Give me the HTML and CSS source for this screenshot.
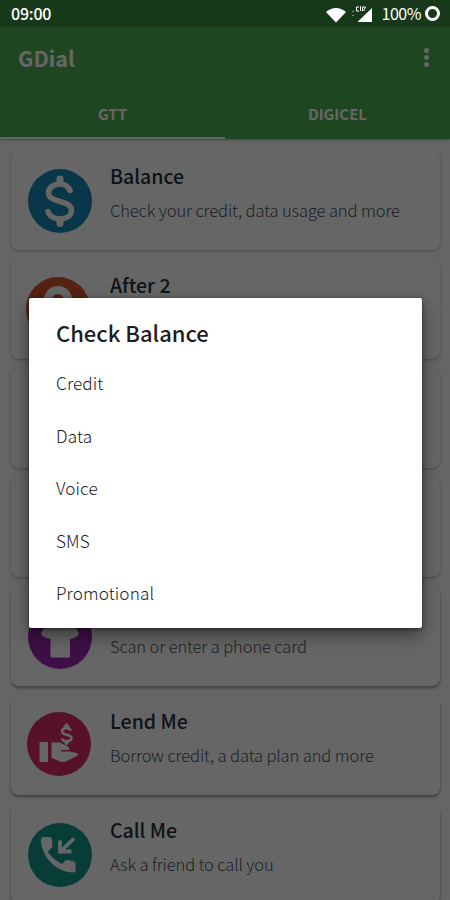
FILE: index.html
```html
<!DOCTYPE html>
<html lang="en">
<head>
<meta charset="utf-8">
<title>GDial</title>
<link rel="stylesheet" href="styles.css">
</head>
<body>
<div class="phone">
  <div class="status">
    <span class="clock">09:00</span>
    <svg class="status-icons" width="50" height="20" viewBox="0 0 50 20">
      <path fill="#fff" d="M2 8Q12 0 22 8L12 18.500Z"/>
      <path fill="#fff" d="M33.500 18 48 4V18Z"/>
      <path fill="none" stroke="#fff" d="M35 3h-2.500v4h2.500M36.500 2v5M38.500 7V3h3l-2 4"/>
      <path fill="#719174" d="M28 7h2v1h-2zM28 11h2v1h-2z"/>
    </svg>
    <span class="percent">100%</span>
    <span class="battery"></span>
  </div>
  <header class="header">
    <div class="toolbar">
      <h1 class="app-name">GDial</h1>
      <div class="more"><i></i><i></i><i></i></div>
    </div>
    <nav class="tabs"><span class="tab active">GTT</span><span class="tab">DIGICEL</span></nav>
  </header>
  <main class="list">
    <section class="card">
      <svg class="icon" viewBox="0 0 64 64"><circle cx="32" cy="32" r="32" fill="#1b87b9"/><path fill="none" stroke="#fff" stroke-width="5.500" stroke-linecap="round" d="M42 21.500C40 16.500 35 14.500 31 15C25 15.500 20.500 19 20.500 23.500C20.500 29 25 30.500 32 32.500C39 34.500 43.500 36 43.500 41.500C43.500 47 38 50 32 50C26 50 21 47 20 42.500"/><path stroke="#fff" stroke-width="7" stroke-linecap="round" d="M32 10v4M32 51v3.500"/></svg>
      <div class="copy"><h2>Balance</h2><p>Check your credit, data usage and more</p></div>
    </section>
    <section class="card">
      <svg class="icon centered" viewBox="0 0 64 64"><circle cx="32" cy="32" r="32" fill="#d6552f"/><circle cx="32" cy="23" r="10" fill="none" stroke="#fff" stroke-width="8"/></svg>
      <div class="copy"><h2>After 2</h2></div>
    </section>
    <section class="card"></section>
    <section class="card"></section>
    <section class="card">
      <svg class="icon" viewBox="0 0 64 64"><circle cx="32" cy="32" r="32" fill="#9c27b0"/><path fill="#fff" stroke="#fff" stroke-width="3" stroke-linejoin="round" d="M32 12 48 26Q51 30 46 31L40.500 33V51H24V33L18 31Q13 30 16 26Z"/></svg>
      <div class="copy no-title"><p>Scan or enter a phone card</p></div>
    </section>
    <section class="card">
      <svg class="icon shifted" viewBox="0 0 64 64"><circle cx="32" cy="32" r="32" fill="#d92d67"/><path fill="#fff" d="M12.500 30h8.500v20h-8.500zM24.500 30.500H33l9 4.500v3h-8v1.500h9l6.500 1.500q3 1 .5 3L41 48.500Q37 51 32 49l-7.500-3Z"/><path fill="none" stroke="#fff" stroke-width="2.500" d="M44 18.500C42 15 35 15.500 35 19.500C35 24 44.500 21.500 44.500 26C44.500 30 36.500 30 34.500 26.500"/><path fill="#fff" d="m35.500 15.500 4-4.500 4 4.500zM35.500 29l4 4.500 4-4.500z"/></svg>
      <div class="copy"><h2>Lend Me</h2><p>Borrow credit, a data plan and more</p></div>
    </section>
    <section class="card">
      <svg class="icon" viewBox="0 0 64 64"><circle cx="32" cy="32" r="32" fill="#16998a"/><path fill="#fff" d="M15 14h6.500q2 0 2.300 2l.7 6.500q0 2-1.700 3.500l-3 2.500Q24 36 34 41l3-3q1.200-1.200 3-1l6 1.500q1.500.5 1.500 2V47q0 2.500-2.500 2.500C29 49.500 13 34 13 16.500Q13 14 15 14Z"/><path fill="none" stroke="#fff" stroke-width="3.800" d="M46 15.500 33 28M32 17.500V28.500H43.500"/></svg>
      <div class="copy"><h2>Call Me</h2><p>Ask a friend to call you</p></div>
    </section>
  </main>
  <div class="scrim">
    <div class="dialog" role="dialog">
      <h2 class="dialog-title">Check Balance</h2>
      <ul class="options"><li>Credit</li><li>Data</li><li>Voice</li><li>SMS</li><li>Promotional</li></ul>
    </div>
  </div>
</div>
</body>
</html>
```
FILE: styles.css
```css
* { box-sizing: border-box; margin: 0; padding: 0; }
body { font-family: "Noto Sans CJK SC", "Noto Sans", sans-serif; }
.phone { position: relative; width: 450px; height: 900px; overflow: hidden; background: #fcfcfc; }
.status { position: relative; z-index: 3; height: 27px; background: #173819; color: #fff; display: flex; align-items: center; padding: 0 10px 0 11px; font-size: 16px; line-height: 27px; }
.clock { font-weight: 500; letter-spacing: -.2px; }
.status-icons { margin-left: auto; margin-right: 8px; width: 50px; }
.percent { font-size: 16px; letter-spacing: -.5px; }
.battery { width: 15px; height: 15px; border: 3px solid #fff; border-radius: 50%; margin-left: 4px; }
.header { height: 112px; background: #4caf50; color: #fff; display: flex; flex-direction: column; box-shadow: 0 1px 2px rgba(0,0,0,.3); }
.toolbar { height: 61px; display: flex; justify-content: space-between; align-items: center; padding: 0 21px 0 18px; }
.app-name { font-size: 21.500px; line-height: 30px; font-weight: 700; }
.more { display: flex; flex-direction: column; gap: 2px; }
.more i { width: 5px; height: 5px; border-radius: 50%; background: #fff; }
.tabs { flex: 1; display: grid; grid-template-columns: 1fr 1fr; font-size: 15px; font-weight: 700; line-height: 51px; text-align: center; }
.tab { height: 51px; }
.tab.active { border-bottom: 2px solid #fff; }
.list { display: flex; flex-direction: column; gap: 10px; padding: 12px 10px 0 11px; }
.card { flex: none; height: 99px; border-radius: 8px; background: #fff; box-shadow: 0 1px 3px rgba(0,0,0,.28); display: flex; padding: 18px 18px 0 17px; }
.card:nth-child(n+5) { box-shadow: 0 2px 3px rgba(0,0,0,.38); }
.icon { width: 64px; height: 64px; flex: none; margin-right: 18px; }
.icon.shifted { margin-left: -1px; margin-right: 19px; margin-top: -2px; }
.icon.centered { margin-left: -2px; margin-right: 20px; margin-top: -1px; }
.copy { margin-top: -7px; white-space: nowrap; }
.copy.no-title { padding-top: 28px; }
.copy h2 { font-size: 19.500px; line-height: 28px; font-weight: 500; color: #26323e; }
.copy p { font-size: 16.500px; line-height: 24px; margin-top: 8px; font-weight: 300; letter-spacing: -.1px; color: #48535e; }
.scrim { position: absolute; z-index: 2; inset: 0; background: rgba(0,0,0,.6); padding: 298px 28px 0 29px; }
.dialog { height: 330px; background: #fff; border-radius: 2px; box-shadow: 0 8px 18px rgba(0,0,0,.4), 0 1px 4px rgba(0,0,0,.45); padding: 18px 27px; }
.dialog-title { font-size: 22px; line-height: 32px; font-weight: 500; color: #1d1d1d; }
.options { list-style: none; margin-top: 9px; }
.options li { height: 52.500px; line-height: 51px; font-size: 17.200px; font-weight: 300; letter-spacing: .1px; color: #1c1c1c; }
```
